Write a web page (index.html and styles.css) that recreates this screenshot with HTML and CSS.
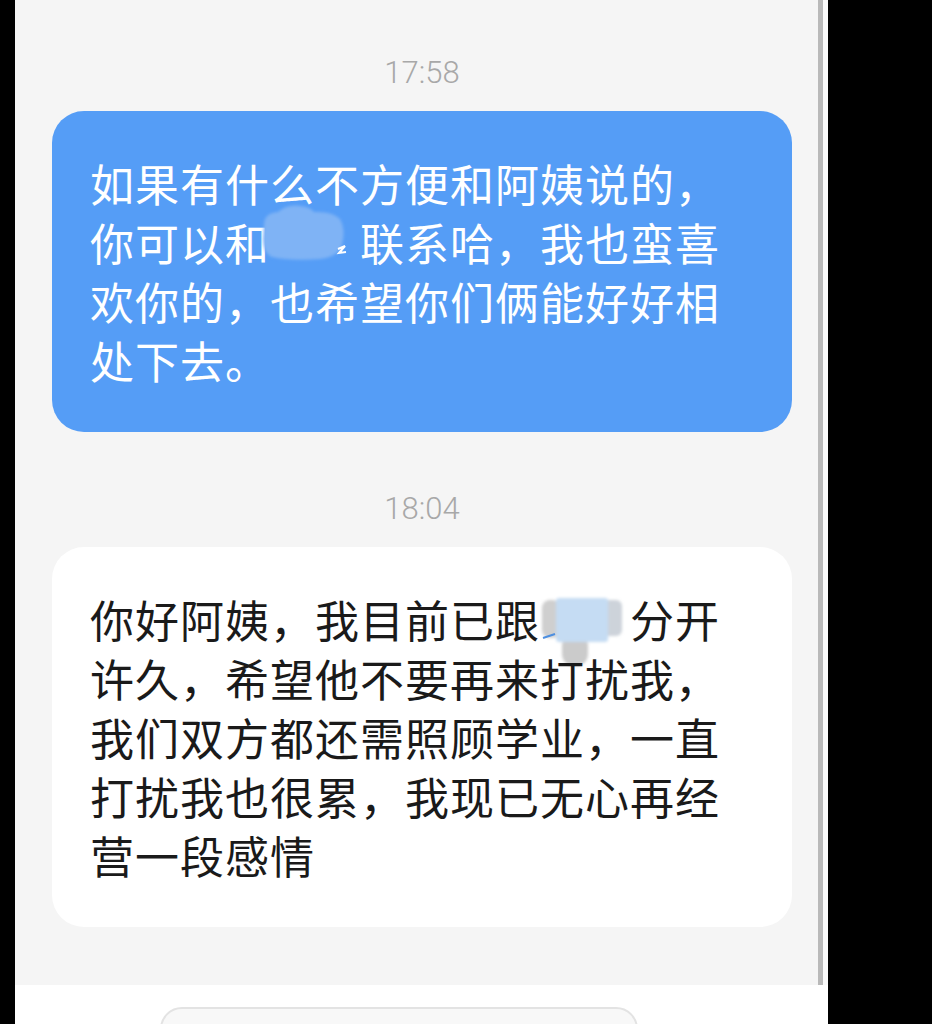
FILE: index.html
```html
<!DOCTYPE html>
<html lang="zh-CN">
<head>
  <meta charset="UTF-8" />
  <title>短信</title>
  <meta name="viewport" content="width=device-width, initial-scale=1.0" />
  <link rel="stylesheet" href="styles.css">
</head>
<body>

  <div class="phone">
    <div class="chat">
      <div class="time first">17:58</div>

      <div class="bubble sent">如果有什么不方便和阿姨说的，你可以和<span class="redact"><svg width="90" height="59" viewBox="0 0 90 59">
            <defs><filter id="soft"><feGaussianBlur stdDeviation="1.6" /></filter></defs>
            <path filter="url(#soft)" fill="#7fb3f5" d="M-6 12 Q-6 0 8 -1 Q18 -9 30 -7 Q40 -6 44 -1 Q62 -2 70 6 Q76 16 72 32 Q68 44 50 46 Q20 48 2 44 Q-7 40 -7 26 Z" />
            <path fill="none" stroke="#fff" stroke-width="2" d="M68 36 L75 33 L69 40 L76 39" />
          </svg></span>联系哈，我也蛮喜欢你的，也希望你们俩能好好相处下去。</div>

      <div class="time">18:04</div>

      <div class="bubble received">你好阿姨，我目前已跟<span class="redact"><svg width="90" height="59" viewBox="0 0 90 59">
            <defs><filter id="soft2"><feGaussianBlur stdDeviation="1.4" /></filter></defs>
            <g filter="url(#soft2)">
              <rect x="2" y="10" width="18" height="38" rx="8" fill="#cfcfcf" />
              <rect x="58" y="10" width="24" height="36" rx="6" fill="#cdd3da" />
              <rect x="22" y="44" width="26" height="32" rx="12" fill="#cbcbcb" />
              <rect x="16" y="8" width="52" height="44" rx="3" fill="#c5dcf3" />
            </g>
            <path fill="none" stroke="#4d8fe0" stroke-width="2" d="M3 48 L15 44" />
          </svg></span>分开许久，希望他不要再来打扰我，我们双方都还需照顾学业，一直打扰我也很累，我现已无心再经营一段感情</div>
    </div>

    <div class="composer">
      <div class="input"></div>
    </div>
  </div>

</body>
</html>
```

FILE: styles.css
```css
html,
body {
  margin: 0;
  height: 100%;
  overflow: hidden;
}

body {
  background: #000;
  font-family: "Noto Sans CJK SC", "Noto Sans", sans-serif;
}

.phone {
  width: 813px;
  height: 1024px;
  margin-left: 15px;
  background: #fafafa;
  overflow: hidden;
}

.chat {
  width: 740px;
  height: 985px;
  padding: 0 26px 0 37px;
  background: #f5f5f5;
  border-right: 5px solid #b9b9b9;
}

.time {
  margin: 57px 0 18px;
  font-family: Roboto, "Liberation Sans", sans-serif;
  font-size: 31px;
  font-weight: 300;
  line-height: 40px;
  color: #a8a8a8;
  text-align: center;
}

.time.first {
  margin-top: 0;
  padding-top: 53px;
}

.bubble {
  padding: 43px 38px 42px;
  border-radius: 32px;
  font-size: 44px;
  letter-spacing: 1px;
  line-height: 59px;
}

.sent {
  background: #559df6;
  color: #fff;
}

.received {
  background: #fff;
  color: #1a1a1a;
}

.redact {
  display: inline-block;
  width: 90px;
  height: 59px;
  vertical-align: top;
  letter-spacing: 0;
}

.redact svg {
  display: block;
  overflow: visible;
}

.composer {
  height: 39px;
  padding: 22px 0 0 145px;
  background: #fff;
}

.input {
  width: 474px;
  height: 40px;
  border: 2px solid #e3e3e3;
  border-radius: 22px;
  background: #f8f8f8;
}
```
